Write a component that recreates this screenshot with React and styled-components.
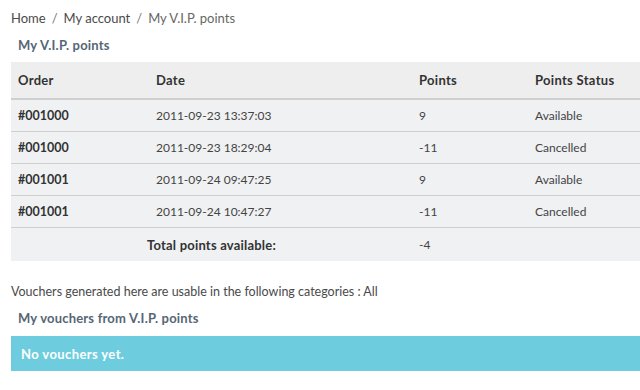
import React from "react";
import styled, { createGlobalStyle } from "styled-components";

const GlobalStyle = createGlobalStyle`
  html, body {
    margin: 0;
    padding: 0;
    background: #fff;
    overflow: hidden;
  }
  body {
    font-family: Lato, "Open Sans", sans-serif;
    color: #333;
  }
`;

const Page = styled.div`
  width: 660px;
  padding: 9px 0 0 11px;
  box-sizing: border-box;
`;

const Breadcrumb = styled.div`
  display: flex;
  gap: 6px;
  font-size: 13px;
  font-weight: 400;
  color: #4a4a4a;
  line-height: 18px;

  span.sep {
    color: #777;
  }
  span.current {
    color: #666;
  }
`;

const Heading = styled.h2`
  margin: 9px 0 0 7px;
  font-size: 13px;
  font-weight: 700;
  color: #566676;
  line-height: 18px;
  letter-spacing: 0.2px;
`;

const Table = styled.table`
  width: 100%;
  margin-top: 8px;
  border-collapse: collapse;
  font-size: 12px;
  background: #f0f1f3;
`;

const HeadCell = styled.th`
  height: 36px;
  padding: 0 7px;
  text-align: left;
  font-size: 13px;
  font-weight: 700;
  color: #333;
  letter-spacing: 0.3px;
  background: #eeeeee;
  border-bottom: 2px solid #cfcfcf;
  width: ${(p) => p.$w || "auto"};
`;

const Row = styled.tr`
  & + & td {
    border-top: 1px solid #cfcfcf;
  }
`;

const Cell = styled.td`
  height: 31px;
  padding: 0 7px;
  font-weight: ${(p) => (p.$bold ? 700 : 400)};
  font-size: ${(p) => (p.$bold ? "12.5px" : "12px")};
  color: ${(p) => (p.$bold ? "#333" : "#444")};
  text-align: ${(p) => p.$align || "left"};
`;

const TotalRow = styled.tr`
  td {
    border-top: 1px solid #cfcfcf;
  }
`;

const TotalLabel = styled.td`
  height: 31px;
  text-align: center;
  font-size: 13px;
  font-weight: 700;
  letter-spacing: 0.2px;
  color: #333;
`;

const Note = styled.p`
  margin: 23px 0 0;
  font-size: 12.5px;
  font-weight: 400;
  color: #4a4a4a;
  line-height: 16px;
`;

const Alert = styled.div`
  margin-top: 9px;
  height: 35px;
  display: flex;
  align-items: center;
  padding: 0 10px;
  background: #6dcdde;
  color: #fff;
  font-size: 13px;
  font-weight: 700;
  letter-spacing: 0.4px;
`;

const rows = [
  { order: "#001000", date: "2011-09-23 13:37:03", points: "9", status: "Available" },
  { order: "#001000", date: "2011-09-23 18:29:04", points: "-11", status: "Cancelled" },
  { order: "#001001", date: "2011-09-24 09:47:25", points: "9", status: "Available" },
  { order: "#001001", date: "2011-09-24 10:47:27", points: "-11", status: "Cancelled" },
];

export default function App() {
  return (
    <Page>
      <GlobalStyle />
      <Breadcrumb>
        <span>Home</span>
        <span className="sep">/</span>
        <span>My account</span>
        <span className="sep">/</span>
        <span className="current">My V.I.P. points</span>
      </Breadcrumb>
      <Heading>My V.I.P. points</Heading>
      <Table>
        <thead>
          <tr>
            <HeadCell $w="124px">Order</HeadCell>
            <HeadCell $w="249px">Date</HeadCell>
            <HeadCell $w="102px">Points</HeadCell>
            <HeadCell>Points Status</HeadCell>
          </tr>
        </thead>
        <tbody>
          {rows.map((r, i) => (
            <Row key={i}>
              <Cell $bold>{r.order}</Cell>
              <Cell>{r.date}</Cell>
              <Cell>{r.points}</Cell>
              <Cell>{r.status}</Cell>
            </Row>
          ))}
          <TotalRow>
            <TotalLabel colSpan={2}>Total points available:</TotalLabel>
            <Cell>-4</Cell>
            <Cell />
          </TotalRow>
        </tbody>
      </Table>
      <Note>Vouchers generated here are usable in the following categories : All</Note>
      <Heading>My vouchers from V.I.P. points</Heading>
      <Alert>No vouchers yet.</Alert>
    </Page>
  );
}
